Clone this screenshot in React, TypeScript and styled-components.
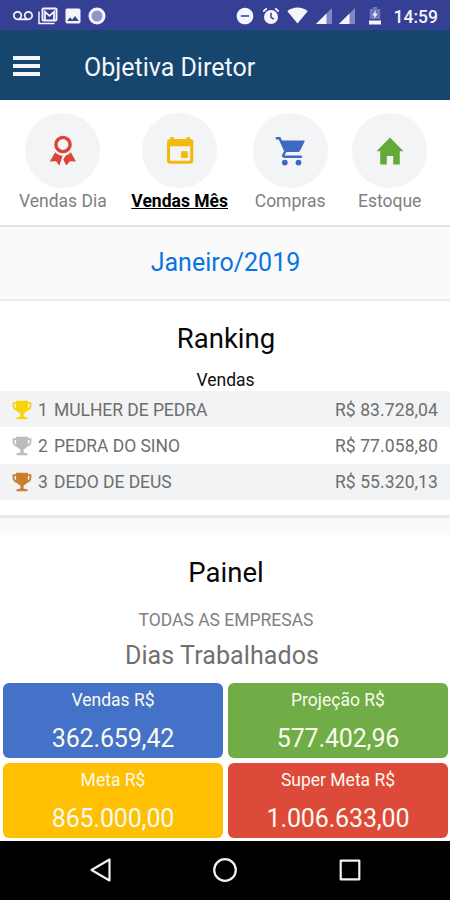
import React from "react";
import styled, { createGlobalStyle } from "styled-components";
import { MdVoicemail, MdImage, MdRemoveCircle } from "react-icons/md";

const GlobalStyle = createGlobalStyle`
  * { box-sizing: border-box; }
  body { margin: 0; background: #fff; }
`;

const Screen = styled.div`
  width: 450px;
  height: 900px;
  display: flex;
  flex-direction: column;
  overflow: hidden;
  background: #fff;
  color: #6e6e6e;
  font-family: Roboto, "Liberation Sans", sans-serif;
  font-size: 17.5px;
  line-height: 22px;
  svg { display: block; flex: none; }
`;

const StatusBar = styled.div`
  height: 30px;
  flex: none;
  display: flex;
  justify-content: space-between;
  align-items: center;
  padding: 1px 12px 0 13px;
  background: #353f93;
  color: #f4f5fd;
`;

const StatusGroup = styled.div<{ $gap: number }>`
  display: flex;
  align-items: center;
  gap: ${(p) => p.$gap}px;
`;

const Clock = styled.span`
  margin-left: 3px;
  font-weight: 500;
  line-height: 28px;
  padding-top: 2px;
`;

const Header = styled.header`
  height: 70px;
  flex: none;
  display: flex;
  align-items: center;
  padding: 1px 13px 0;
  gap: 44px;
  background: #16456d;
  color: #f3f7fb;
`;

const MenuButton = styled.button`
  width: 27px;
  height: 20px;
  padding: 0;
  border: 0;
  background: none;
  color: inherit;
  display: flex;
  flex-direction: column;
  justify-content: space-between;
`;

const MenuLine = styled.span`
  height: 4px;
  background: currentColor;
`;

const AppTitle = styled.h1`
  margin: 0;
  padding-top: 4px;
  font-size: 25px;
  font-weight: 400;
  line-height: 32px;
`;

const Tabs = styled.nav`
  height: 127px;
  flex: none;
  display: flex;
  gap: 25px;
  padding: 13px 0 0 19px;
  border-bottom: 2px solid #e4e4e4;
`;

const Tab = styled.div<{ $active?: boolean }>`
  display: flex;
  flex-direction: column;
  align-items: center;
  gap: 2px;
  color: ${(p) => (p.$active ? "#000" : "#808080")};
  font-weight: ${(p) => (p.$active ? 700 : 400)};
  text-decoration: ${(p) => (p.$active ? "underline" : "none")};
  white-space: nowrap;
  margin-right: -0.4px;
`;

const TabCircle = styled.div<{ $color: string }>`
  width: 75px;
  height: 75px;
  border-radius: 50%;
  display: flex;
  align-items: center;
  justify-content: center;
  background: #f2f4f5;
  color: ${(p) => p.$color};
`;

const Month = styled.div`
  height: 74px;
  flex: none;
  display: flex;
  align-items: center;
  justify-content: center;
  padding: 0 0 0 1px;
  border-bottom: 2px solid #ececec;
  background: #fafafa;
  color: #0a74e0;
  font-size: 25px;
`;

const Section = styled.section<{ $height: number; $pad: number }>`
  height: ${(p) => p.$height}px;
  flex: none;
  display: flex;
  flex-direction: column;
  padding-top: ${(p) => p.$pad}px;
  text-align: center;
`;

const SectionTitle = styled.h2`
  margin: 0;
  padding-left: 2px;
  font-size: 27.5px;
  font-weight: 400;
  line-height: 34px;
  color: #080808;
`;

const Caption = styled.div`
  height: 22px;
  margin-top: 13px;
  padding-left: 1px;
  color: #111;
`;

const RankRow = styled.div<{ $shaded: boolean }>`
  height: 36.4px;
  display: flex;
  align-items: center;
  padding: 1px 12px 0 12px;
  background: ${(p) => (p.$shaded ? "#f2f3f4" : "#fff")};
`;

const RankPosition = styled.span`
  width: 16px;
  margin-left: 6px;
  text-align: left;
`;

const RankName = styled.span`
  flex: 1;
  text-align: left;
  letter-spacing: -0.05px;
`;

const RankValue = styled.span`
  letter-spacing: 0.1px;
`;

const Divider = styled.div`
  height: 18px;
  flex: none;
  border-top: 3px solid #e9e9e9;
  background: #fafafa;
`;

const Company = styled.div`
  margin-top: 19px;
  padding-left: 2px;
  color: #808080;
`;

const WorkedDays = styled.div`
  margin-top: 9px;
  font-size: 25px;
  line-height: 32px;
  color: #707070;
  padding-right: 6px;
  letter-spacing: 0.1px;
`;

const Cards = styled.div`
  flex: none;
  display: grid;
  grid-template-columns: 220px 220px;
  grid-auto-rows: 75px;
  gap: 5px;
  padding: 0 2px 3px 3px;
`;

const Card = styled.div<{ $color: string }>`
  display: flex;
  flex-direction: column;
  align-items: center;
  gap: 11px;
  padding-top: 6px;
  border-radius: 6px;
  background: ${(p) => p.$color};
  color: #fbfaf0;
`;

const CardValue = styled.span`
  font-size: 25px;
  line-height: 34px;
  letter-spacing: -0.15px;
`;

const NavBar = styled.div`
  flex: 1;
  display: flex;
  align-items: center;
  justify-content: space-between;
  padding: 0 88px 1px;
  background: #000;
`;

const GmailIcon = () => (
  <svg width="20" height="18" viewBox="0 0 20 18" fill="none" stroke="currentColor">
    <path d="M1 4.5V16.5H16.5" strokeWidth="1.5" />
    <rect x="4.5" y="1.5" width="14" height="12" rx="1" strokeWidth="2" />
    <path d="M7 13V4.8L11.5 8.8L16 4.8V13" strokeWidth="1.8" />
  </svg>
);

const RecordIcon = () => (
  <svg width="18" height="18" viewBox="0 0 18 18">
    <circle cx="9" cy="9" r="7" fill="#8f95ca" stroke="currentColor" strokeWidth="3" />
  </svg>
);

const AlarmIcon = () => (
  <svg width="18" height="18" viewBox="0 0 18 18" fill="none" stroke="currentColor">
    <circle cx="9" cy="10" r="7" fill="currentColor" stroke="none" />
    <path d="M1.2 4.5L4.8 1.4M16.8 4.5L13.2 1.4" strokeWidth="1.8" />
    <path d="M9 5.8V10.3L11.8 12.2" stroke="#353f93" strokeWidth="1.5" />
  </svg>
);

const WifiIcon = () => (
  <svg width="21" height="17" viewBox="0 0 21 17">
    <path d="M0.3 4.2C6 -0.8 15 -0.8 20.7 4.2L10.5 16.5Z" fill="currentColor" />
  </svg>
);

const SignalIcon = () => (
  <svg width="16" height="16" viewBox="0 0 16 16">
    <path d="M0 16L16 0V16Z" fill="#8086c2" />
    <path d="M0 16L10.5 5.5V16Z" fill="currentColor" />
  </svg>
);

const BatterySlot = styled.span`
  margin: 0 2px 0 7px;
`;

const BatteryIcon = () => (
  <svg width="12" height="18" viewBox="0 0 12 18">
    <path d="M4 0H8V2H11.2V12H0.8V2H4Z" fill="#7177b8" />
    <path d="M0 13.5H12V17.5H0Z" fill="currentColor" />
    <path d="M7 3L3.4 8.4H5.7L5 12L8.7 6.8H6.4Z" fill="currentColor" />
  </svg>
);

const RibbonIcon = () => (
  <svg width="28" height="32" viewBox="0 0 28 32" fill="currentColor">
    <circle cx="14" cy="9.5" r="7.1" fill="none" stroke="currentColor" strokeWidth="3.4" />
    <path d="M6.2 17.2C8 19.2 10.4 20.4 13.6 20.8L10.4 30.6L7 26.2L0.8 26.4Z" />
    <path d="M21.8 17.2C20.4 18.8 18.8 19.9 16.8 20.5L14.2 24.6L17.3 30.6L20.8 26.2L27 26.4Z" />
  </svg>
);

const CalendarIcon = () => (
  <svg width="28" height="29" viewBox="0 0 28 29" fill="currentColor">
    <path
      fillRule="evenodd"
      d="M4.5 1H7.8V3H20.6V1H24V3A3.2 3.2 0 0 1 27.3 6.2V24.8A3 3 0 0 1 24.3 27.8H4A3 3 0 0 1 1 24.8V6.2A3.2 3.2 0 0 1 4.5 3ZM4.1 10.2V23.9Q4.1 24.8 5 24.8H23.3Q24.2 24.8 24.2 23.9V10.2Z"
    />
    <path d="M15 15.2H21.8V22H15Z" />
  </svg>
);

const CartIcon = () => (
  <svg width="31" height="30" viewBox="0 0 31 30" fill="none" stroke="currentColor" strokeWidth="2.4">
    <path d="M0.8 2.2H4.5L10.5 15.2L8.2 19.2Q7.6 20.7 9.5 20.7H26.8" />
    <path d="M5.6 4.5H28.8Q30 4.6 29.5 5.8L25 14.7Q24.4 16 23 16H10.8Z" fill="currentColor" stroke="none" />
    <circle cx="9.8" cy="26.6" r="2.9" fill="currentColor" stroke="none" />
    <circle cx="23.5" cy="26.6" r="2.9" fill="currentColor" stroke="none" />
  </svg>
);

const HomeIcon = () => (
  <svg width="28" height="28" viewBox="0 0 28 28" fill="currentColor">
    <path d="M14 0.5L27.5 14.2H23.8V27.5H17.2V19H10.8V27.5H4.2V14.2H0.5Z" />
  </svg>
);

const TrophyIcon = ({ color }: { color: string }) => (
  <svg width="20" height="20" viewBox="0 0 20 20" fill={color}>
    <path
      fillRule="evenodd"
      d="M4 0.8H16V2.2H19.4V5.5C19.4 8.5 17.5 10.4 15 10.9C14 12.2 12.8 12.9 11.6 13.3V16.4L15.5 17.4V19.3H4.5V17.4L8.4 16.4V13.3C7.2 12.9 6 12.2 5 10.9C2.5 10.4 0.6 8.5 0.6 5.5V2.2H4ZM2.5 4.1V5.6C2.5 7 3.1 7.9 4.1 8.5V4.1ZM15.9 4.1V8.5C16.9 7.9 17.5 7 17.5 5.6V4.1Z"
    />
  </svg>
);

const TABS = [
  { label: "Vendas Dia", color: "#db4437", icon: <RibbonIcon /> },
  { label: "Vendas Mês", color: "#f5b80c", icon: <CalendarIcon />, active: true },
  { label: "Compras", color: "#3d69c4", icon: <CartIcon /> },
  { label: "Estoque", color: "#63aa3c", icon: <HomeIcon /> },
];

const RANKING = [
  { name: "MULHER DE PEDRA", value: "R$ 83.728,04", color: "#f7d40a" },
  { name: "PEDRA DO SINO", value: "R$ 77.058,80", color: "#bcbcbc" },
  { name: "DEDO DE DEUS", value: "R$ 55.320,13", color: "#cb7d30" },
];

const CARDS = [
  { label: "Vendas R$", value: "362.659,42", color: "#4472c8" },
  { label: "Projeção R$", value: "577.402,96", color: "#70ad46" },
  { label: "Meta R$", value: "865.000,00", color: "#ffc003" },
  { label: "Super Meta R$", value: "1.006.633,00", color: "#de4a3a" },
];

export default function App() {
  return (
    <Screen>
      <GlobalStyle />
      <StatusBar>
        <StatusGroup $gap={5}>
          <MdVoicemail size={20} />
          <GmailIcon />
          <MdImage size={20} />
          <RecordIcon />
        </StatusGroup>
        <StatusGroup $gap={7.3}>
          <MdRemoveCircle size={20} />
          <AlarmIcon />
          <WifiIcon />
          <SignalIcon />
          <SignalIcon />
          <BatterySlot>
            <BatteryIcon />
          </BatterySlot>
          <Clock>14:59</Clock>
        </StatusGroup>
      </StatusBar>
      <Header>
        <MenuButton aria-label="Menu">
          <MenuLine />
          <MenuLine />
          <MenuLine />
        </MenuButton>
        <AppTitle>Objetiva Diretor</AppTitle>
      </Header>
      <Tabs>
        {TABS.map((t) => (
          <Tab key={t.label} $active={t.active}>
            <TabCircle $color={t.color}>{t.icon}</TabCircle>
            {t.label}
          </Tab>
        ))}
      </Tabs>
      <Month>Janeiro/2019</Month>
      <Section $height={214} $pad={21}>
        <SectionTitle>Ranking</SectionTitle>
        <Caption>Vendas</Caption>
        {RANKING.map((r, i) => (
          <RankRow key={r.name} $shaded={i % 2 === 0}>
            <TrophyIcon color={r.color} />
            <RankPosition>{i + 1}</RankPosition>
            <RankName>{r.name}</RankName>
            <RankValue>{r.value}</RankValue>
          </RankRow>
        ))}
      </Section>
      <Divider />
      <Section $height={150} $pad={23}>
        <SectionTitle>Painel</SectionTitle>
        <Company>TODAS AS EMPRESAS</Company>
        <WorkedDays>Dias Trabalhados</WorkedDays>
      </Section>
      <Cards>
        {CARDS.map((c) => (
          <Card key={c.label} $color={c.color}>
            <span>{c.label}</span>
            <CardValue>{c.value}</CardValue>
          </Card>
        ))}
      </Cards>
      <NavBar>
        <svg width="24" height="26" viewBox="0 0 24 26" fill="none" stroke="#f2f2f2" strokeWidth="2.2" strokeLinejoin="round">
          <path d="M3.5 13L21.5 2.5V23.5Z" />
        </svg>
        <svg width="26" height="26" viewBox="0 0 26 26" fill="none" stroke="#f2f2f2" strokeWidth="2.2">
          <circle cx="13" cy="13" r="10.8" />
        </svg>
        <svg width="24" height="26" viewBox="0 0 24 26" fill="none" stroke="#f2f2f2" strokeWidth="2.2" strokeLinejoin="round">
          <rect x="2.7" y="3.7" width="18.6" height="18.6" />
        </svg>
      </NavBar>
    </Screen>
  );
}
